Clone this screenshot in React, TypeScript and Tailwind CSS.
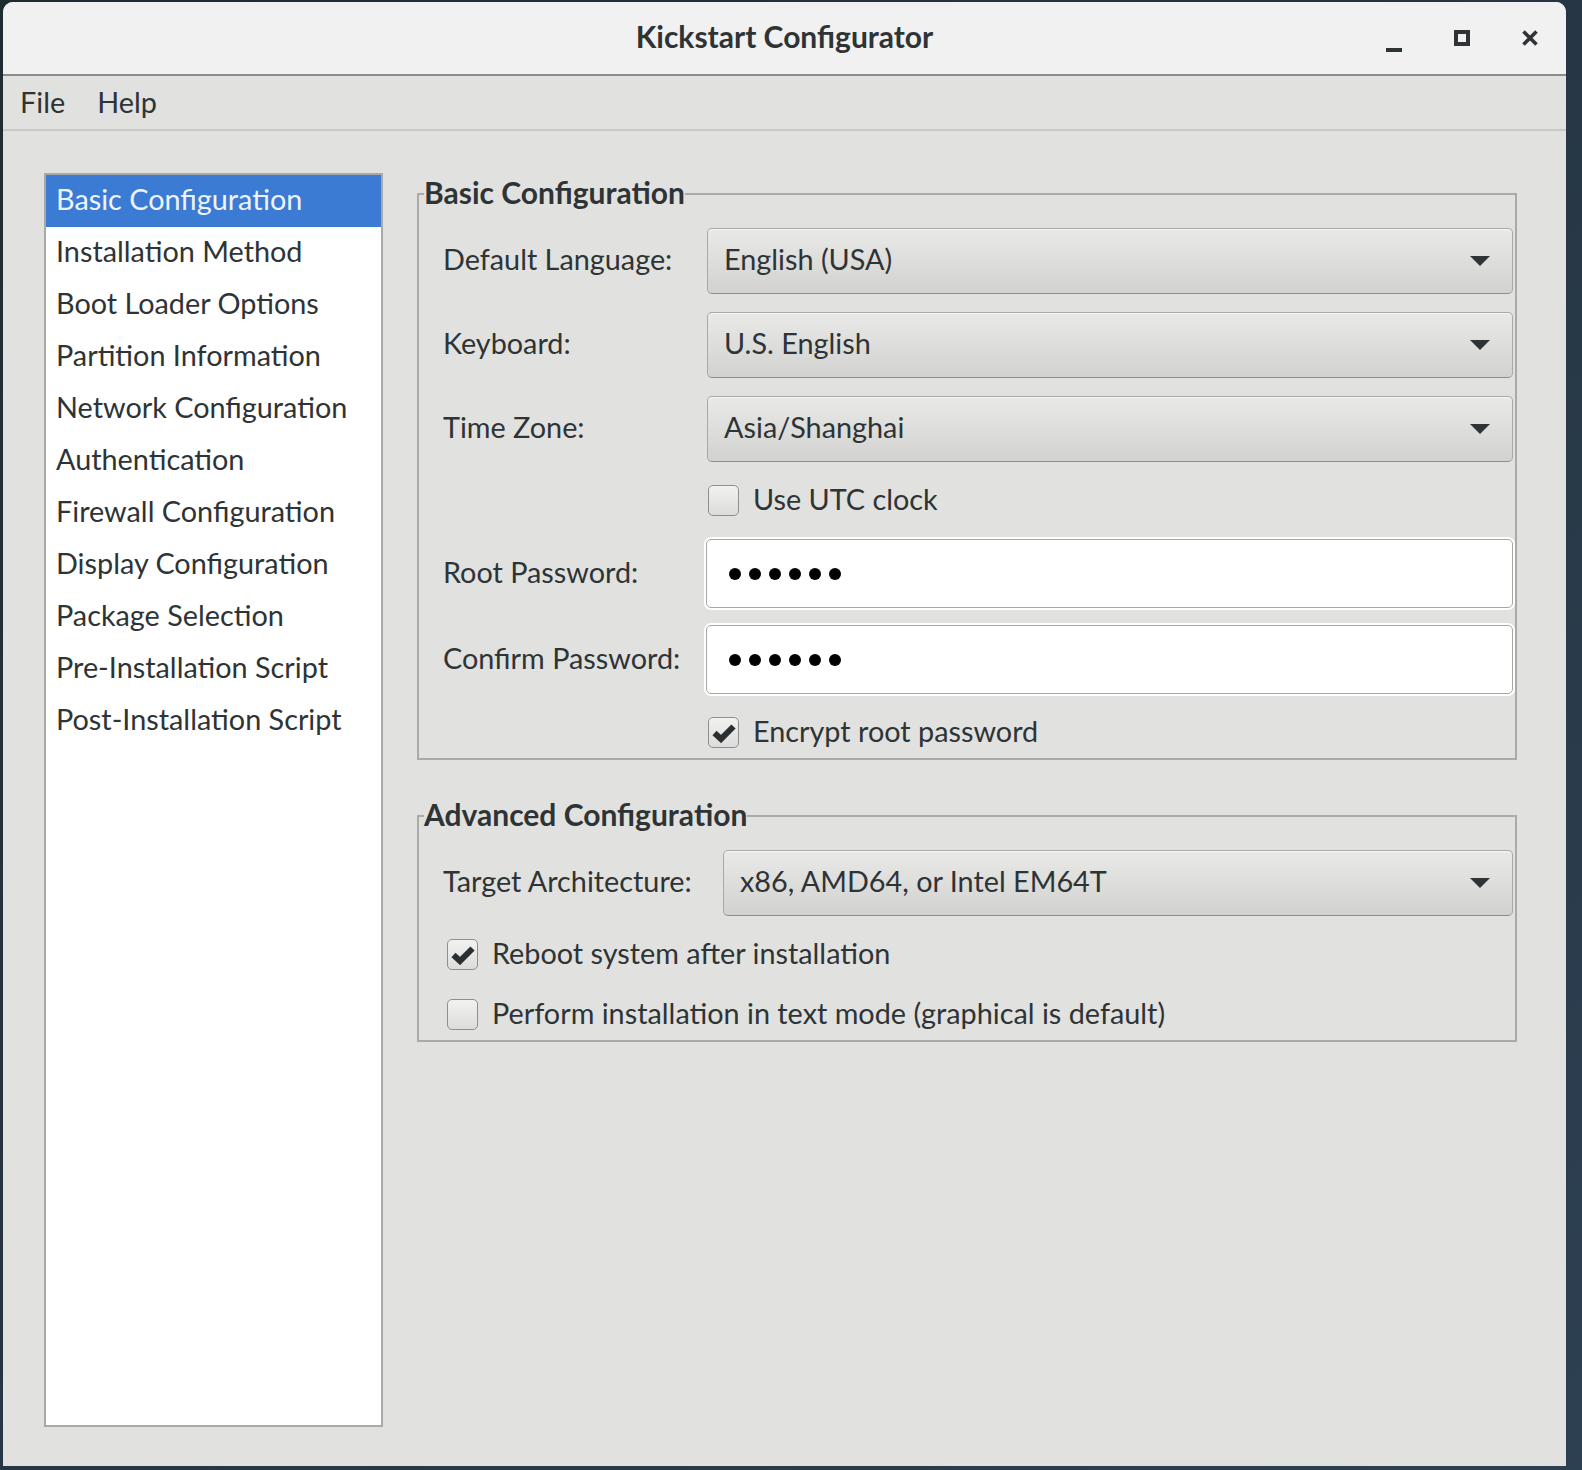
import React from "react";

const menuItems = [
  "Basic Configuration",
  "Installation Method",
  "Boot Loader Options",
  "Partition Information",
  "Network Configuration",
  "Authentication",
  "Firewall Configuration",
  "Display Configuration",
  "Package Selection",
  "Pre-Installation Script",
  "Post-Installation Script",
];

const Arrow = () => (
  <svg width="20" height="10" viewBox="0 0 20 10" className="shrink-0">
    <path d="M0 0 L20 0 L10 10 Z" fill="#2e3436" />
  </svg>
);

const Combo = ({ value }: { value: string }) => (
  <div className="flex-1 h-[66px] flex items-center justify-between pl-[16px] pr-[22px] rounded-[5px] border-[1.5px] border-[#a9a9a6] border-b-[#8d8d8a] bg-gradient-to-b from-[#e9e9e8] to-[#d2d2d0] shadow-[inset_0_1px_0_#f6f6f5]">
    <span className="pb-[2px]">{value}</span>
    <Arrow />
  </div>
);

const Check = ({ checked, label, className = "" }: { checked?: boolean; label: string; className?: string }) => (
  <div className={`flex items-center gap-[14px] h-[31px] ${className}`}>
    <div className="w-[31px] h-[31px] rounded-[5px] border-[1.5px] border-[#8f8f8c] bg-gradient-to-b from-[#f2f2f1] to-[#dcdcda] flex items-center justify-center">
      {checked && (
        <svg width="24" height="20" viewBox="0 0 24 20">
          <path d="M2.5 10 L9 16 L21.5 3.5" fill="none" stroke="#2a2f31" strokeWidth="6" strokeLinecap="butt" strokeLinejoin="miter" />
        </svg>
      )}
    </div>
    <span className="pb-[2px]">{label}</span>
  </div>
);

const Password = () => (
  <div className="flex-1 h-[69px] flex items-center gap-[8px] pl-[22px] bg-white rounded-[5px] border-[1.5px] border-[#a7a7a4] shadow-[0_0_0_2px_#ffffff]">
    {[0, 1, 2, 3, 4, 5].map((i) => (
      <span key={i} className="w-[12px] h-[12px] rounded-full bg-black" />
    ))}
  </div>
);

export default function App() {
  return (
    <div className="w-[1582px] h-[1470px] bg-gradient-to-br from-[#1f2c30] via-[#263644] to-[#2d4052] pt-[2px] pl-[3px] font-['Lato','Noto_Sans',sans-serif] text-[28.8px] text-[#2e3436] overflow-hidden">
      <div className="w-[1563px] h-[1464px] bg-[#e1e1df] rounded-t-[10px] flex flex-col overflow-hidden">
        {/* title bar */}
        <div className="h-[74px] shrink-0 bg-[#f1f1f1] border-b-2 border-[#8b8b87] grid grid-cols-[1fr_auto_1fr] items-center">
          <div />
          <div className="font-bold text-[30px] leading-none pb-[4px]">Kickstart Configurator</div>
          <div className="flex justify-end pr-[2px]">
            <div className="w-[68px] h-[40px] flex items-end justify-center pb-[6px]">
              <span className="w-[16px] h-[4px] bg-[#2e3436]" />
            </div>
            <div className="w-[68px] h-[40px] flex items-center justify-center">
              <span className="w-[16px] h-[16px] border-[4px] border-[#2e3436]" />
            </div>
            <div className="w-[68px] h-[40px] flex items-center justify-center">
              <svg width="16" height="16" viewBox="0 0 16 16">
                <path d="M1.5 1.5 L14.5 14.5 M14.5 1.5 L1.5 14.5" stroke="#2e3436" strokeWidth="3.6" />
              </svg>
            </div>
          </div>
        </div>

        {/* menu bar */}
        <div className="h-[55px] shrink-0 border-b-2 border-[#c9c9c7] flex items-center gap-[32px] pl-[17px]">
          <span>File</span>
          <span>Help</span>
        </div>

        {/* body */}
        <div className="flex-1 flex gap-[34px] pl-[41px] pr-[49px] pt-[42px] pb-[39px]">
          <div className="w-[339px] shrink-0 bg-white border-2 border-[#a9a9a7] flex flex-col">
            {menuItems.map((item, i) => (
              <div
                key={item}
                className={`h-[52px] flex items-center pl-[10px] pb-[3px] ${i === 0 ? "bg-[#3b7bd3] text-[#eef3fb]" : ""}`}
              >
                {item}
              </div>
            ))}
          </div>

          <div className="flex-1 flex flex-col pt-[3px]">
            <fieldset className="border-2 border-[#aaaaa7] pl-[24px] pr-[2px] pb-[10px]">
              <legend className="ml-[-19px] font-bold text-[30px] leading-[33px] pb-[3px]">Basic Configuration</legend>
              <div className="flex flex-col pt-[16px]">
                <div className="flex items-center">
                  <span className="w-[264px] shrink-0 pb-[2px]">Default Language:</span>
                  <Combo value="English (USA)" />
                </div>
                <div className="flex items-center mt-[18px]">
                  <span className="w-[264px] shrink-0 pb-[2px]">Keyboard:</span>
                  <Combo value="U.S. English" />
                </div>
                <div className="flex items-center mt-[18px]">
                  <span className="w-[264px] shrink-0 pb-[2px]">Time Zone:</span>
                  <Combo value="Asia/Shanghai" />
                </div>
                <Check label="Use UTC clock" className="mt-[23px] ml-[265px]" />
                <div className="flex items-center mt-[23px]">
                  <span className="w-[263px] shrink-0 pb-[2px]">Root Password:</span>
                  <Password />
                </div>
                <div className="flex items-center mt-[17px]">
                  <span className="w-[263px] shrink-0 pb-[2px]">Confirm Password:</span>
                  <Password />
                </div>
                <Check checked label="Encrypt root password" className="mt-[23px] ml-[265px]" />
              </div>
            </fieldset>

            <fieldset className="mt-[38px] border-2 border-[#aaaaa7] pl-[24px] pr-[2px] pb-[10px]">
              <legend className="ml-[-19px] font-bold text-[30px] leading-[33px] pb-[3px]">Advanced Configuration</legend>
              <div className="flex flex-col pt-[16px]">
                <div className="flex items-center">
                  <span className="w-[280px] shrink-0 pb-[2px]">Target Architecture:</span>
                  <Combo value="x86, AMD64, or Intel EM64T" />
                </div>
                <Check checked label="Reboot system after installation" className="mt-[23px] ml-[4px]" />
                <Check label="Perform installation in text mode (graphical is default)" className="mt-[29px] ml-[4px]" />
              </div>
            </fieldset>
          </div>
        </div>
      </div>
    </div>
  );
}
